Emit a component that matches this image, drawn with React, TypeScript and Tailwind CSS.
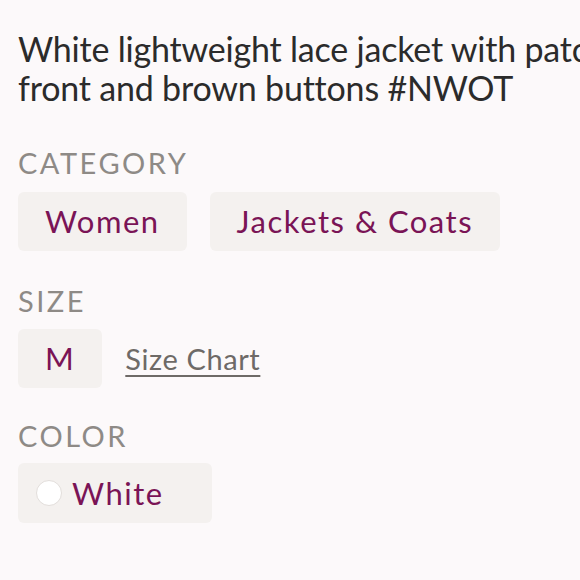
const plum = 'text-[#7a1456]';

function Pill({ children }: { children: React.ReactNode }) {
  return (
    <div className={`flex h-[59px] items-center rounded-md bg-[#f4f1ef] px-[27px] text-[31px] tracking-[1.5px] ${plum}`}>
      {children}
    </div>
  );
}

function Label({ children }: { children: React.ReactNode }) {
  return <div className="text-[29px] uppercase leading-none tracking-[2.5px] text-[#8e8a86]">{children}</div>;
}

export default function App() {
  return (
    <div
      className="h-[580px] w-[580px] overflow-hidden bg-[#fcf9fa] pl-[18px]"
      style={{ fontFamily: 'Lato, "Open Sans", sans-serif' }}
    >
      <p className="mt-[29px] whitespace-nowrap text-[34px] tracking-[-0.2px] leading-[39px] text-[#2b2b2b]">
        White lightweight lace jacket with patch
        <br />
        front and brown buttons #NWOT
      </p>

      <div className="mt-[41px]">
        <Label>Category</Label>
        <div className="mt-[15px] flex gap-[23px]">
          <Pill>Women</Pill>
          <Pill>Jackets &amp; Coats</Pill>
        </div>
      </div>

      <div className="mt-[35px]">
        <Label>Size</Label>
        <div className="mt-[14px] flex items-center gap-[23px]">
          <Pill>M</Pill>
          <a className="text-[29px] tracking-[0.6px] text-[#6e6a67] underline underline-offset-[5px]">Size Chart</a>
        </div>
      </div>

      <div className="mt-[33px]">
        <Label>Color</Label>
        <div className="mt-[13px] flex">
          <div className={`flex h-[60px] w-[194px] items-center gap-[10px] rounded-md bg-[#f4f1ef] pl-[18px] text-[31px] tracking-[1.5px] ${plum}`}>
            <span className="h-[26px] w-[26px] rounded-full border border-[#e2dedb] bg-white" />
            White
          </div>
        </div>
      </div>

      <div className="mt-[52px] text-[29px] uppercase leading-none tracking-[2.5px] text-[#8e8a86]">Shipping + Discount</div>
    </div>
  );
}
